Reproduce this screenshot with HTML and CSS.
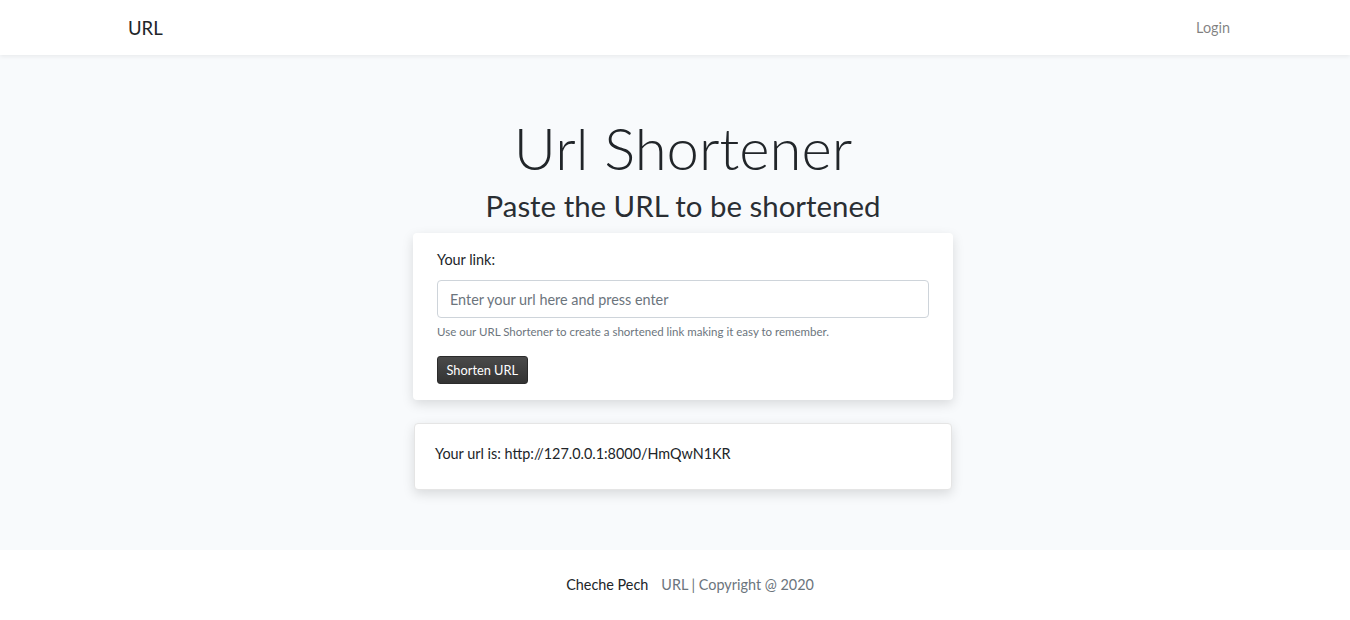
FILE: index.html
```html
<!DOCTYPE html>
<html lang="en">
<head>
<meta charset="utf-8">
<title>URL</title>
<link rel="stylesheet" href="styles.css">
</head>
<body>
<nav class="navbar">
  <div class="container nav-inner">
    <a class="brand" href="#">URL</a>
    <a class="login" href="#">Login</a>
  </div>
</nav>
<main class="main">
  <h1 class="title">Url Shortener</h1>
  <h2 class="subtitle">Paste the URL to be shortened</h2>
  <div class="card form-card">
    <label class="label" for="url">Your link:</label>
    <input class="input" id="url" type="text" placeholder="Enter your url here and press enter">
    <small class="help">Use our URL Shortener to create a shortened link making it easy to remember.</small>
    <button class="btn" type="button">Shorten URL</button>
  </div>
  <div class="card result-card">
    <p class="result">Your url is: http://127.0.0.1:8000/HmQwN1KR</p>
  </div>
</main>
<footer class="footer">
  <span class="author">Cheche Pech</span>
  <span class="copy">URL | Copyright @ 2020</span>
</footer>
</body>
</html>
```
FILE: styles.css
```css
* { box-sizing: border-box; }
html, body { margin: 0; padding: 0; }
body {
  font-family: "Lato", "Noto Sans", sans-serif;
  font-size: 14.4px;
  color: #212529;
  background: #f8fafc;
}
.navbar {
  height: 55px;
  background: #fff;
  box-shadow: 0 2px 4px rgba(0,0,0,.06);
  position: relative;
  z-index: 1;
}
.container {
  width: 1110px;
  margin: 0 auto;
}
.nav-inner {
  height: 100%;
  display: flex;
  align-items: center;
  justify-content: space-between;
  padding-left: 8px;
}
.brand {
  font-size: 18.5px;
  color: #212529;
  text-decoration: none;
}
.login {
  font-size: 14.4px;
  color: rgba(0,0,0,.5);
  text-decoration: none;
}
.main {
  height: 495px;
  display: flex;
  flex-direction: column;
  align-items: center;
  padding-top: 58px;
  padding-left: 16px;
}
.title {
  margin: 0;
  font-size: 58px;
  font-weight: 300;
  line-height: 70px;
}
.subtitle {
  margin: 3px 0 0;
  font-size: 29.4px;
  font-weight: 400;
  line-height: 40px;
  color: #2a2e33;
}
.card {
  background: #fff;
  border-radius: 4px;
  box-shadow: 0 4px 12px rgba(0,0,0,.13);
}
.form-card {
  width: 540px;
  margin-top: 7px;
  padding: 18px 24px 16px;
  display: flex;
  flex-direction: column;
  align-items: flex-start;
}
.label {
  font-size: 14.4px;
  line-height: 18px;
}
.input {
  margin-top: 11px;
  width: 100%;
  height: 38px;
  border: 1px solid #ced4da;
  border-radius: 4px;
  padding: 0 12px;
  font-family: inherit;
  font-size: 14.4px;
  color: #495057;
}
.input::placeholder { color: #6c757d; }
.help {
  margin-top: 5px;
  font-size: 11.5px;
  line-height: 17px;
  color: #6c757d;
}
.btn {
  margin-top: 16px;
  height: 28px;
  padding: 0 8.5px;
  font-family: inherit;
  font-size: 12.8px;
  color: #fff;
  background: linear-gradient(#4a4a4a, #333);
  border: 1px solid #2b2b2b;
  border-radius: 3px;
}
.result-card {
  width: 538px;
  margin-top: 23px;
  height: 67px;
  padding: 20px 20px;
  border: 1px solid #e5e5e5;
}
.result {
  margin: 0;
  font-size: 14.4px;
  line-height: 20px;
}
.footer {
  height: 70px;
  background: #fff;
  display: flex;
  align-items: center;
  justify-content: center;
  gap: 13px;
  font-size: 14.4px;
  padding-left: 30px;
  padding-bottom: 2px;
}
.author { color: #212529; }
.copy { color: #6c757d; }
```
